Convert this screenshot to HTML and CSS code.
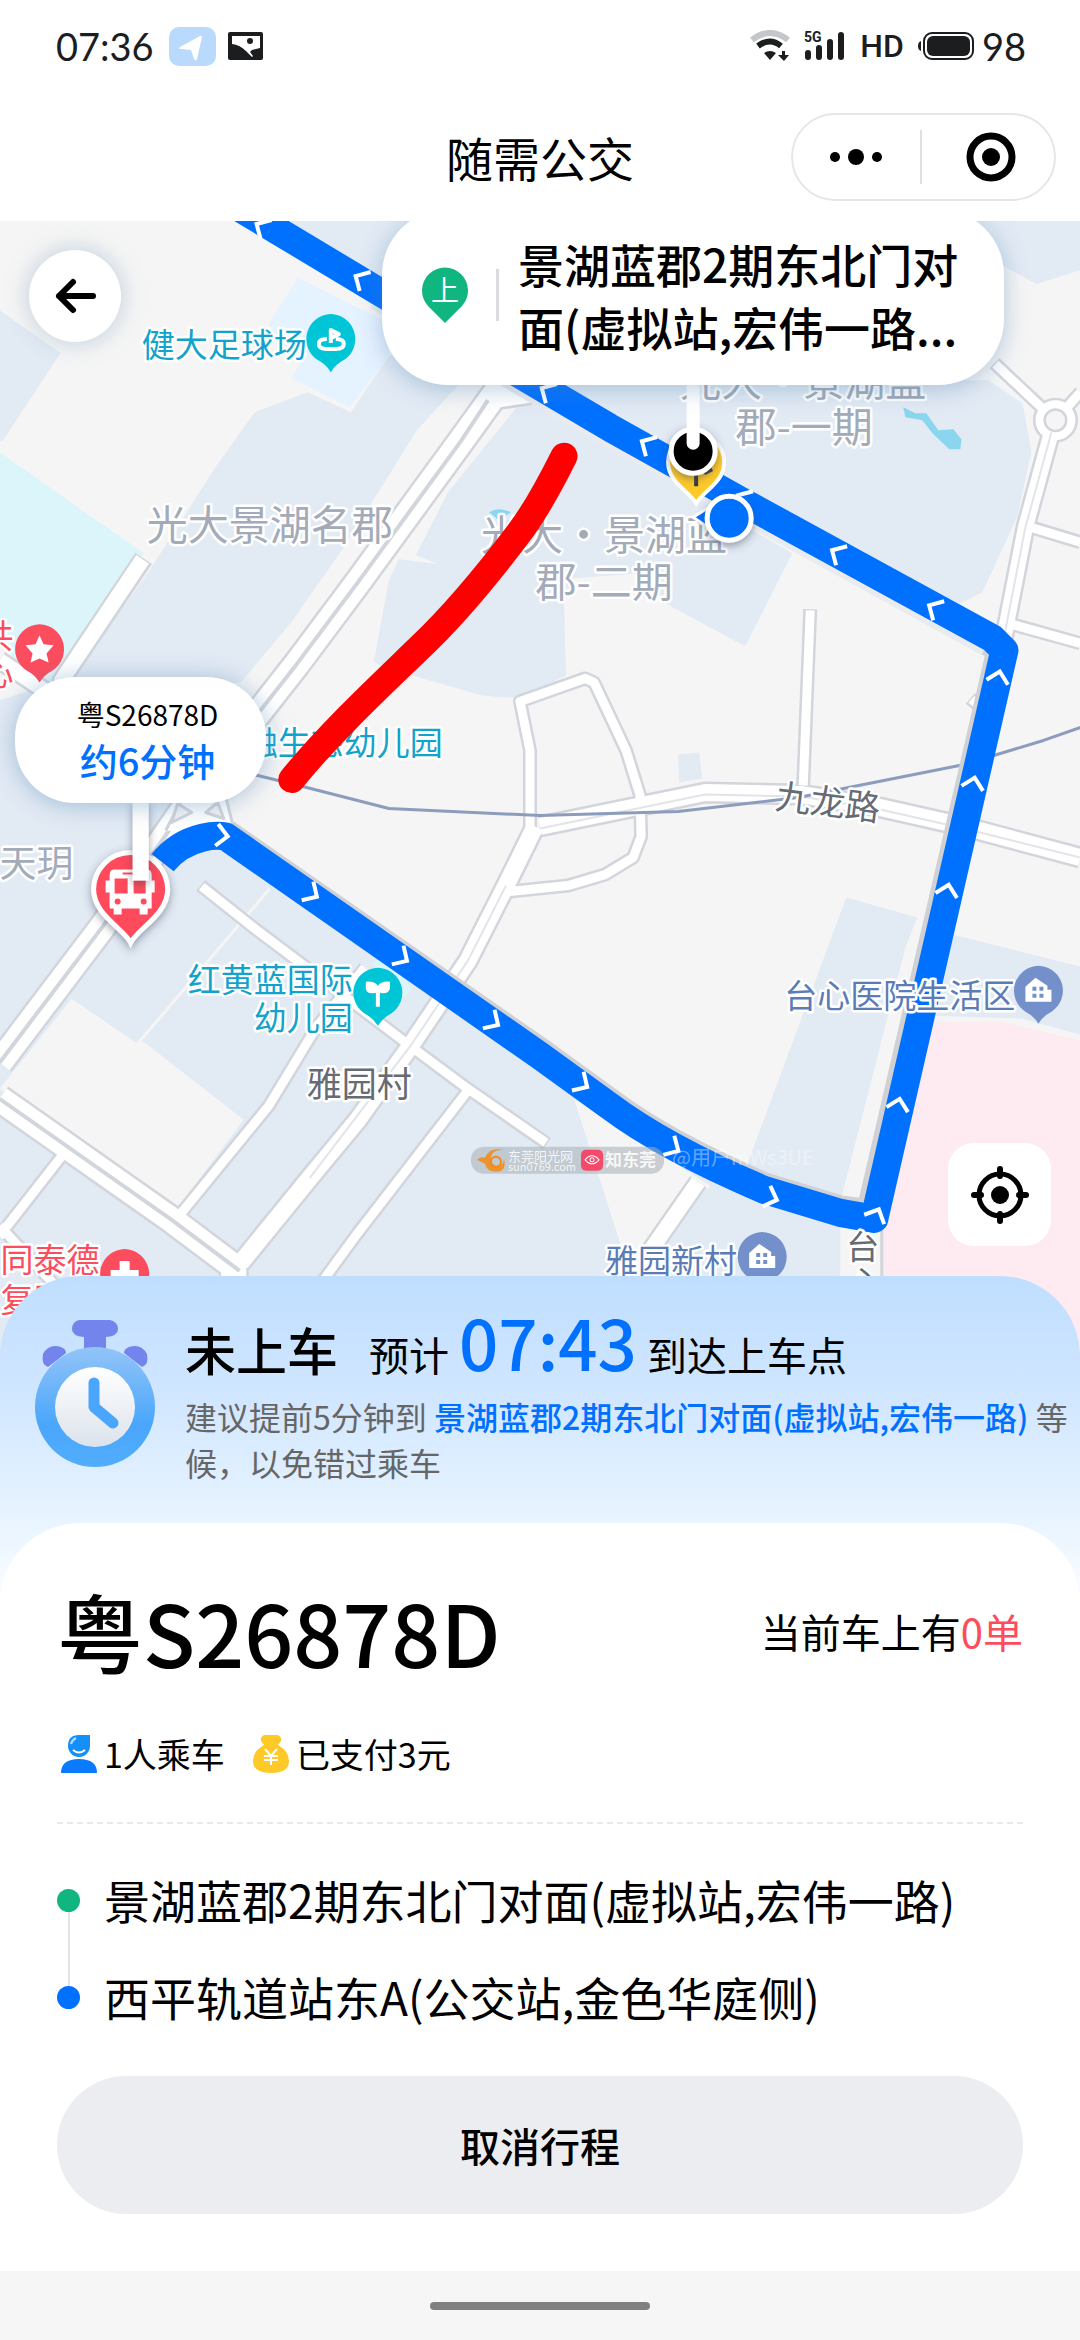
FILE: index.html
```html
<!DOCTYPE html>
<html lang="zh-CN">
<head>
<meta charset="utf-8">
<meta name="viewport" content="width=device-width, initial-scale=1">
<title>随需公交</title>
<link rel="stylesheet" href="styles.css">
</head>
<body>
<div class="app">
  <div class="status">
    <div class="status-group">
      <span class="status-num">07:36</span>
      <svg class="status-nav" viewBox="0 0 47 39" width="47" height="39"><rect width="47" height="39" rx="10" fill="#b9dafc"/><path d="M11 20 31 9q2-1 2 1l-5 22q-1 3-3 0l-3-9-10-1q-3 0-1-2z" fill="#fff"/></svg>
      <svg viewBox="0 0 35 28" width="35" height="28"><rect width="35" height="28" rx="2" fill="#1c1d1f"/><path d="M4 4H32V16l-8 2-2 2 3 4-1 1-6-6q-6-6-14-7z" fill="#fff"/><circle cx="22" cy="9" r="3" fill="#1c1d1f"/></svg>
    </div>
    <div class="status-group status-right">
      <svg viewBox="0 0 40 32" width="40" height="32"><path d="M2 10Q20-4 38 10" fill="none" stroke="#c3c6ca" stroke-width="6"/><path d="M8 16Q20 7 31 16" fill="none" stroke="#1c1d1f" stroke-width="6"/><path d="M14 23q6-4 12 0l-6 7zM32 21h3v4h4l-5 6-6-6h4z" fill="#1c1d1f"/></svg>
      <svg viewBox="0 0 42 32" width="42" height="32"><text x="0" y="12" class="net">5G</text><g stroke="#1c1d1f" stroke-width="6" stroke-linecap="round"><path d="M4 23v4M15 18v9M26 12v15M37 5v22"/></g></svg>
      <span class="status-hd">HD</span>
      <svg class="battery" viewBox="0 0 56 28" width="56" height="28"><path d="M3 9v10q-3-1-3-5t3-5z" fill="#1c1d1f"/><rect x="6" y="1" width="49" height="26" rx="8" fill="none" stroke="#1c1d1f" stroke-width="2"/><rect x="9" y="4" width="43" height="20" rx="6" fill="#1c1d1f"/></svg>
      <span class="status-num level">98</span>
    </div>
  </div>

  <header class="nav">
    <h1 class="nav-title">随需公交</h1>
    <div class="capsule">
      <button class="capsule-btn" aria-label="更多"><svg viewBox="0 0 54 20" width="54" height="20"><circle cx="6" cy="10" r="5"/><circle cx="27" cy="10" r="8"/><circle cx="48" cy="10" r="5"/></svg></button>
      <button class="capsule-btn" aria-label="关闭"><svg viewBox="0 0 50 50" width="50" height="50"><circle cx="25" cy="25" r="21" fill="none" stroke="#000" stroke-width="7"/><circle cx="25" cy="25" r="9"/></svg></button>
    </div>
  </header>

  <main class="map">
    <svg class="map-canvas" viewBox="0 221 1080 1139" preserveAspectRatio="xMidYMin slice" role="img" aria-label="地图">
      <defs>
        <filter id="shadow" x="-50%" y="-50%" width="200%" height="200%"><feDropShadow dx="0" dy="3" stdDeviation="4" flood-color="#34415a" flood-opacity=".5"/></filter>
        <path id="chev" d="M-11 5 0-6 11 5" fill="none" stroke="#fff" stroke-width="4"/>
        <path id="poi" d="M0-25A25 25 0 0 1 13 21Q5 25 0 33-5 25-13 21A25 25 0 0 1 0-25z"/>
        <g id="house"><use href="#poi" fill="#7490cb"/><path d="M-13-4-3-13 9-5V-1h4V11h-26z" fill="#fff"/><path d="M-6-4h4v4h-4zM1-4h4v4H1zM-6 3h4v4h-4zM1 3h4v4H1z" fill="#7490cb"/></g>
      </defs>
      <rect y="221" width="1080" height="1139" fill="#f5f5f5"/>
      <g fill="#e2eaf4">
        <path d="M0 310 61 353 3 441H0zM289 221H460V330z"/>
        <path d="M389 356 351 412 308 392 255 412 217 465 150 570 60 695 241 682 293 620 344 547 417 430 461 382 480 340z"/>
        <path d="M520 403 448 492 416 555 439 564 399 559 389 580 374 661 382 666 482 695 520 698 566 675 564 604 574 578 640 573 667 604 745 646 792 553 600 440 540 400z"/>
        <path d="M540 380H988L1022 403 1031 451 1017 516 982 592 958 604 760 500zM940 221h140v49l-44 14-31-17z"/>
        <path d="M0 1036 103 905 70 800 0 720V700L30 690 150 790 222 830 540 1070 690 1170 840 1220V1360H0z"/>
        <path d="M0 720 60 700 180 800 103 905 0 1036z"/>
        <path d="M846 897 917 917 905 947 840 1201 745 1169zM953 934l127 32v68l-58-16-89-3zM678 754l21-2 3 26-23 4z"/>
      </g>
      <path d="M72 998 138 1043 144 1041 244 1119 172 1215 0 1088zM574 1098 710 1185 650 1360 619 1239z" fill="#f5f5f5"/>
      <path d="M674 1222 700 1185 838 1235 842 1360H620z" fill="#e2eaf4"/>
      <path d="M138 1043 270 888" stroke="#f5f5f5" stroke-width="3"/>
      <path d="M0 452 144 553 60 678 40 690 0 640z" fill="#dbf5fa"/>
      <path d="M298 278 387 322 389 356 350 407 292 378 300 365 269 324z" fill="#e5f2ff"/>
      <path d="M929 1021h72l79 19v320H882l-2-125z" fill="#feebf1"/>
      <path d="M903 407l12 6h11l12 17 15-1 8 10-1 10h-11l-16-15-11-14-17-3zM489 512q10-6 22 0l-12 8z" fill="#8ad6ee"/>
      <path d="M372 962 390 950 412 990 400 1000z" fill="#dbf5fa"/>

      <g fill="none" stroke-linejoin="round">
        <g stroke="#d2d5db">
          <g stroke-width="14">
            <path d="M810 609 803 785M1034 528 1080 542M1012 624 1080 643M970 698 990 715"/>
            <path d="M201 885 255 928 344 995 410 1045 468 1088 547 1143M467 1091 358 1232 320 1284"/>
            <path d="M64 1153 3 1231 0 1236M0 1225 70 1300M176 1219 269 1105 317 1026 365 967"/>
            <path d="M530 830V750L520 701 585 678 594 682 626 750 640 795 641 836 633 857 605 874 568 885 510 891"/>
            <path d="M994 363 1044 410M1064 410 1080 392"/>
          </g>
          <g stroke-width="20"><path d="M144 558 62 680 130 720M698 1181 650 1250M1051 432 1025 527 1003 640"/><circle cx="1055" cy="420" r="16" stroke-width="13"/><path d="M0 660 90 720"/></g>
          <g stroke-width="22"><path d="M540 826 705 792 800 794 871 805 964 826 1080 857M535 826 506 885 468 960 410 1046 358 1119 310 1177 241 1262"/></g>
          <g stroke-width="30"><path d="M505 380 461 441 358 582 296 665 190 800 103 926 0 1062M0 1098 172 1219 240 1270M530 390 490 396M234 1262V1300"/></g>
        </g>
        <g stroke="#fff">
          <g stroke-width="9">
            <path d="M810 610 803 785M1030 527 1080 542M1008 623 1080 643M971 699 990 715"/>
            <path d="M202 886 255 928 344 995 410 1045 468 1088 546 1142M467 1091 358 1232 320 1284"/>
            <path d="M64 1153 3 1231 0 1236M0 1225 70 1300M176 1219 269 1105 317 1026 365 967"/>
            <path d="M530 830V750L520 701 585 678 594 682 626 750 640 795 641 836 633 857 605 874 568 885 510 891"/>
            <path d="M995 364 1044 410M1064 410 1080 392"/>
          </g>
          <g stroke-width="15"><path d="M143 559 62 680 130 720M698 1181 650 1250M1051 432 1025 527 1003 640"/><circle cx="1055" cy="420" r="16" stroke-width="8"/><path d="M0 660 90 720"/></g>
          <g stroke-width="17"><path d="M540 826 705 792 800 794 871 805 964 826 1080 857M535 826 506 885 468 960 410 1046 358 1119 310 1177 241 1262"/></g>
          <g stroke-width="25"><path d="M505 380 461 441 358 582 296 665 190 800 103 926 0 1062M0 1098 172 1219 240 1270M530 390 490 396M234 1262V1300"/></g>
        </g>
        <path d="M488 400 461 441 358 582 296 665 190 800 103 926 0 1062M0 1098 172 1219 240 1270" stroke="#d2d5db" stroke-width="4"/>
        <path d="M540 828 705 794 800 796 871 807 964 828 1080 857M506 885 468 960 410 1046 310 1177M1051 432 1025 527 1003 640" stroke="#e2e4e8" stroke-width="2"/>
        <path d="M166 830 184 796 226 796 236 836" fill="#fff" stroke="#d2d5db" stroke-width="3"/>
        <path d="M172 822 178 803 192 812zM206 812 218 802 224 818z" fill="#f5f5f5" stroke="#d2d5db" stroke-width="3"/>
        <path d="M876 1230V1290" stroke="#d2d5db" stroke-width="14"/><path d="M874 1230V1290" stroke="#f5f5f5" stroke-width="12"/>
        <path d="M200 775 258 775 303 786 389 808 540 815 678 811 798 797 964 764 1043 740 1080 727" stroke="#8c9cbc" stroke-width="3"/>
        <path d="M226 833 541 1052 610 1102Q666 1144 764 1186L840 1209 870 1213 1001 648 988 641" stroke="#cfd1d5" stroke-width="29"/>
        <path d="M988 642 743 507 607 431 378 296" stroke="#e9ebee" stroke-width="29"/>
        <path d="M163 862Q178 843 203 837 216 834 226 836L540 1055 609 1105Q665 1147 764 1189L840 1212 874 1218 1004 650 992 638 745 503 609 427 380 292 240 208" stroke="#0070ff" stroke-width="28"/>
      </g>
      <g>
        <use href="#chev" transform="translate(262 227) rotate(-60)"/><use href="#chev" transform="translate(361 279) rotate(-60)"/>
        <use href="#chev" transform="translate(547 391) rotate(-60)"/><use href="#chev" transform="translate(647 444) rotate(-60)"/>
        <use href="#chev" transform="translate(743 498) rotate(-60)"/><use href="#chev" transform="translate(837 553) rotate(-60)"/>
        <use href="#chev" transform="translate(934 608) rotate(-60)"/><use href="#chev" transform="translate(998 677) rotate(13)"/>
        <use href="#chev" transform="translate(973 783) rotate(13)"/><use href="#chev" transform="translate(947 890) rotate(13)"/>
        <use href="#chev" transform="translate(898 1104) rotate(13)"/><use href="#chev" transform="translate(876 1214) rotate(25)"/>
        <use href="#chev" transform="translate(222 835) rotate(98)"/><use href="#chev" transform="translate(312 893) rotate(122)"/>
        <use href="#chev" transform="translate(402 957) rotate(122)"/><use href="#chev" transform="translate(493 1021) rotate(122)"/>
        <use href="#chev" transform="translate(582 1083) rotate(122)"/><use href="#chev" transform="translate(673 1147) rotate(120)"/>
        <use href="#chev" transform="translate(771 1197) rotate(110)"/>
      </g>

      <g class="label area">
        <text x="147" y="540">光大景湖名郡</text>
        <text x="604" y="550" text-anchor="middle">光大・景湖蓝</text><text x="604" y="597" text-anchor="middle">郡-二期</text>
        <text x="803" y="396" text-anchor="middle">光大・景湖蓝</text><text x="804" y="442" text-anchor="middle">郡-一期</text>
        <text x="74" y="876" text-anchor="end" class="small">天玥</text>
      </g>
      <g class="label cyan">
        <text x="142" y="357">健大足球场</text><text x="443" y="755" text-anchor="end">融生态幼儿园</text>
        <text x="353" y="991" text-anchor="end">红黄蓝国际</text><text x="353" y="1029" text-anchor="end">幼儿园</text>
      </g>
      <g class="label blue"><text x="784" y="1007">台心医院生活区</text><text x="605" y="1272">雅园新村</text></g>
      <g class="label red"><text x="14" y="648" text-anchor="end">共</text><text x="14" y="686" text-anchor="end">心</text><text x="1" y="1271">同泰德</text><text x="1" y="1311">复医</text></g>
      <g class="label grey"><text x="307" y="1096">雅园村</text><text x="774" y="808" transform="rotate(7 774 808)">九龙路</text><text x="846" y="1258" class="narrow">台</text><text x="848" y="1294" class="narrow">心</text></g>

      <g transform="translate(331 339)"><use href="#poi" fill="#00c5d6"/><path d="M0 4V-9L8-5 0-1M-4 0q-8 0-8 5t8 5H5q8 0 8-5T5 0" fill="none" stroke="#fff" stroke-width="4" stroke-linejoin="round"/></g>
      <g transform="translate(40 649)"><use href="#poi" fill="#fb4d5e"/><path d="M0-14 4-5 14-4 7 4 9 13 0 9-9 13-7 4-14-4-4-5z" fill="#fff"/></g>
      <g transform="translate(378 992)"><use href="#poi" fill="#00c5d6"/><path d="M-12-11q8-1 12 4 4-5 12-4v7Q10 2 2 0v14h-4V0Q-11 2-12-4z" fill="#fff"/></g>
      <use href="#house" x="1038" y="990"/><use href="#house" x="762" y="1256"/>
      <g transform="translate(125 1273)"><use href="#poi" fill="#fb4d5e"/><path d="M-5-13H5v9H14V6H-14V-4H-5z" fill="#fff"/></g>

      <path d="M564 456C548 488 535 512 518 534 490 571 455 614 420 647 385 681 330 732 292 779" fill="none" stroke="#f00" stroke-width="27" stroke-linecap="round"/>

      <path d="M696 503C688 490 668 482 668 462A28 28 0 0 1 724 462C724 482 704 490 696 503z" fill="#ffca28" stroke="#fff" stroke-width="4"/>
      <path d="M696 470v16M704 473l8-4" stroke="#3c3c3c" stroke-width="4"/>
      <circle cx="693" cy="451" r="22" fill="#000" stroke="#fff" stroke-width="5" filter="url(#shadow)"/>
      <path d="M693 380v63" stroke="#fff" stroke-width="13" stroke-linecap="round"/>
      <path d="M693 517 712 505V530z" fill="#0070ff" stroke="#fff" stroke-width="3"/>
      <circle cx="729" cy="518" r="22" fill="#0070ff" stroke="#fff" stroke-width="5" filter="url(#shadow)"/>
      <g filter="url(#shadow)"><path d="M131 942C124 928 94 914 94 889A37 37 0 0 1 168 889C168 914 138 928 131 942z" fill="#ff4a5c" stroke="#fff" stroke-width="5"/></g>
      <path d="M114 869h34q4 0 4 6v5h3v12h-3v16h-4v6h-8v-6h-18v6h-8v-6h-4v-16h-4v-12h4v-5q0-6 4-6z" fill="#fff"/><path d="M115 878h13v15h-13zM134 878h12v15h-12zM123 872h16v2h-16z" fill="#ff4a5c"/><circle cx="118" cy="901" r="3" fill="#ff4a5c"/><circle cx="144" cy="901" r="3" fill="#ff4a5c"/>
      <rect x="133" y="800" width="16" height="80" fill="#fff" filter="url(#shadow)"/>

      <g class="mark">
        <rect x="471" y="1146" width="193" height="27" rx="13" fill="#a6adb5" fill-opacity=".55"/>
        <path d="M477 1159q4-4 8-2 4-11 19-8-13 0-13 9 0 7 8 8 5-3 5-8 3 13-8 13-9 0-11-8z" fill="#f58a12"/>
        <circle cx="496" cy="1161" r="5" fill="none" stroke="#f58a12" stroke-width="2"/>
        <text x="508" y="1160" font-size="13">东莞阳光网</text><text x="508" y="1170" font-size="11">sun0769.com</text>
        <rect x="581" y="1149" width="22" height="21" rx="5" fill="#fb3459"/><path d="M585 1159q7-8 14 0-7 8-14 0z" fill="none" stroke="#fff" stroke-width="1"/><circle cx="592" cy="1159" r="2" fill="none" stroke="#fff"/>
        <text x="605" y="1165" font-size="17" font-weight="700">知东莞</text>
        <text x="672" y="1164" font-size="20" fill-opacity=".4">@用户mWs3UE</text>
      </g>
    </svg>

    <button class="back" aria-label="返回"><svg viewBox="0 0 44 40" width="44" height="40"><path d="M40 20H6M20 6 6 20 20 34" fill="none" stroke="#000" stroke-width="6" stroke-linecap="round" stroke-linejoin="round"/></svg></button>
    <div class="stop-card">
      <svg viewBox="0 0 46 56" width="46" height="56"><path d="M23 56 6 39A23 23 0 1 1 40 39z" fill="#10b57f"/><text x="23" y="34" class="pin-text">上</text></svg>
      <p class="stop-name">景湖蓝郡2期东北门对面(虚拟站,宏伟一路...</p>
    </div>
    <div class="bus-bubble"><span class="bus-plate">粤S26878D</span><strong class="bus-eta">约6分钟</strong></div>
    <button class="locate" aria-label="定位"><svg viewBox="0 0 60 60" width="60" height="60"><circle cx="30" cy="30" r="21" fill="none" stroke="#000" stroke-width="5"/><circle cx="30" cy="30" r="9"/><path d="M30 4v7M30 49v7M4 30h7M49 30h7" stroke="#000" stroke-width="6" stroke-linecap="round"/></svg></button>
  </main>

  <section class="sheet">
    <div class="head">
      <svg class="clock" viewBox="0 0 124 148" width="124" height="148">
        <defs><linearGradient id="ring" x1="0" y1="0" x2="0" y2="1"><stop offset="0" stop-color="#93c4f7"/><stop offset=".65" stop-color="#49a6fc"/><stop offset="1" stop-color="#52adfb"/></linearGradient><linearGradient id="face" x1="0" y1="0" x2="0" y2="1"><stop offset="0" stop-color="#fff"/><stop offset="1" stop-color="#dce3ec"/></linearGradient></defs>
        <path d="M46 0h31q8 2 8 9t-12 8v12H51V17q-12-1-12-8t7-9zM10 34Q16 23 28 27q5 2 5 6L15 47q-7-2-5-13zM114 34Q108 23 96 27q-5 2-5 6l18 14q7-2 5-13z" fill="#7384ec"/>
        <circle cx="62" cy="87" r="60" fill="url(#ring)"/><circle cx="62" cy="87" r="40" fill="url(#face)"/>
        <path d="M61 63v24l19 16" fill="none" stroke="#49a6fc" stroke-width="11" stroke-linecap="round" stroke-linejoin="round"/>
      </svg>
      <div class="head-text">
        <p class="eta"><strong class="state">未上车</strong><span>预计</span><time class="time">07:43</time><span>到达上车点</span></p>
        <p class="tip">建议提前5分钟到 <b>景湖蓝郡2期东北门对面(虚拟站,宏伟一路)</b> 等候，以免错过乘车</p>
      </div>
    </div>
    <div class="panel">
      <div class="plate-row"><h2 class="plate">粤S26878D</h2><p class="load">当前车上有<em>0单</em></p></div>
      <div class="meta">
        <span class="meta-item"><svg viewBox="0 0 36 38" width="36" height="38"><path d="M7 11Q7 0 18 0H29V11A11 11 0 0 1 7 11z" fill="#1590fa"/><path d="M12 15q6 5 12 0" fill="none" stroke="#fff" stroke-width="2"/><path d="M10 9q1-4 5-6" fill="none" stroke="#b8dcff" stroke-width="2"/><path d="M0 38q0-14 18-14t18 14z" fill="#0a7bff"/></svg>1人乘车</span>
        <span class="meta-item"><svg viewBox="0 0 36 38" width="36" height="38"><path d="M11 0H25q4 2 3 6l-3 4Q36 16 36 26 36 38 18 38T0 26Q0 16 11 10L8 6q-1-4 3-6z" fill="#ffca28"/><path d="M12 14l6 7 6-7M18 21v9M11 21h14M11 25h14" fill="none" stroke="#fff" stroke-width="2"/></svg>已支付3元</span>
      </div>
      <ul class="stops"><li class="stop start">景湖蓝郡2期东北门对面(虚拟站,宏伟一路)</li><li class="stop end">西平轨道站东A(公交站,金色华庭侧)</li></ul>
      <button class="cancel">取消行程</button>
    </div>
  </section>
  <div class="home"><span class="home-bar"></span></div>
</div>
</body>
</html>
```
FILE: styles.css
```css
* { box-sizing: border-box; }
body, h1, h2, p, ul { margin: 0; padding: 0; }
body { font-family: "Noto Sans CJK SC", sans-serif; color: #000; background: #fff; }
button { border: 0; padding: 0; font: inherit; color: inherit; display: flex; align-items: center; justify-content: center; }
svg { display: block; flex: none; }
.app { display: flex; flex-direction: column; min-height: 100vh; overflow: hidden; }

.status { height: 92px; padding: 0 54px 0 56px; display: flex; align-items: center; justify-content: space-between; color: #1c1d1f; }
.status-group { display: flex; align-items: center; gap: 12px; }
.status-right { gap: 14px; }
.status-num { font: 38px/40px Lato, sans-serif; }
.level { margin-left: -6px; }
.status-nav { margin-left: 3px; }
.status-hd { font: 500 32px/40px Roboto, sans-serif; }
.net { font: bold 14px Roboto, sans-serif; fill: #1c1d1f; }

.nav { height: 129px; padding: 0 24px; display: grid; grid-template-columns: 1fr auto 1fr; align-items: center; }
.nav-title { grid-column: 2; font-size: 47px; line-height: 60px; font-weight: 400; }
.capsule { justify-self: end; display: flex; width: 265px; height: 88px; border: 2px solid #e6e6e6; border-radius: 44px; align-items: center; }
.capsule-btn { flex: 1; height: 54px; background: none; }
.capsule-btn + .capsule-btn { border-left: 2px solid #e0e0e0; padding-left: 6px; }

.map { position: relative; flex: 1; min-height: 700px; margin-bottom: -85px; overflow: hidden; }
.map-canvas { position: absolute; inset: 0; width: 100%; height: 100%; }
.label { font-size: 33px; stroke: #fff; stroke-width: 5px; stroke-linejoin: round; paint-order: stroke; }
.area { font-size: 41px; fill: #a3abb9; }
.area .small { font-size: 37px; }
.cyan { fill: #12a3cc; }
.blue { fill: #5c7cb6; }
.red { fill: #fb4d5e; }
.grey { font-size: 35px; fill: #666b74; }
.narrow { font-size: 33px; }
.mark { fill: #fff; fill-opacity: .85; }

.back { position: absolute; left: 29px; top: 29px; width: 92px; height: 92px; border-radius: 50%; background: #fff; box-shadow: 0 0 24px rgba(90, 130, 170, .35); }
.stop-card { position: absolute; left: 382px; top: -12px; width: 622px; padding: 23px 40px 27px; display: flex; align-items: center; border-radius: 66px; background: #fff; box-shadow: 0 4px 24px rgba(80, 130, 175, .4); }
.pin-text { font-size: 28px; fill: #fff; text-anchor: middle; }
.stop-name { display: flex; align-items: center; flex: 1; margin-left: 28px; font-size: 46px; line-height: 63px; font-weight: 500; }
.stop-name::before { content: ""; flex: none; width: 3px; height: 52px; margin-right: 19px; background: #d9dbdf; }
.bus-bubble { position: absolute; left: 15px; top: 456px; width: 251px; height: 126px; padding: 0 0 4px 14px; display: flex; flex-direction: column; align-items: center; justify-content: center; border-radius: 60px; background: #fff; box-shadow: 0 2px 24px rgba(80, 130, 175, .45); }
.bus-plate { font-size: 28px; line-height: 44px; }
.bus-eta { font-size: 38px; line-height: 48px; font-weight: 500; color: #0070ff; }
.locate { position: absolute; right: 29px; bottom: 115px; width: 103px; height: 103px; border-radius: 26px; background: #fff; }

.sheet { position: relative; border-radius: 80px 80px 0 0; background: linear-gradient(#bfdeff 0, #d0e6ff 115px, #e6f3ff 235px, #fafdff 320px, #fff 350px); }
.head { display: flex; gap: 28px; padding: 29px 8px 38px 33px; }
.clock { margin-top: 15px; }
.head-text { flex: 1; display: flex; flex-direction: column; gap: 3px; }
.eta { display: flex; align-items: baseline; font-size: 40px; line-height: 72px; }
.state { font-size: 51px; font-weight: 500; margin-right: 31px; }
.time { font-size: 69px; font-weight: 500; color: #0070ff; margin: 0 10px; }
.tip { font-size: 32px; line-height: 46px; color: #666; }
.tip b { font-weight: 500; color: #0070ff; }

.panel { padding: 64px 57px 57px; border-radius: 80px 80px 0 0; background: #fff; }
.plate-row { display: flex; align-items: center; justify-content: space-between; }
.plate { font-size: 86px; line-height: 88px; font-weight: 500; }
.load { font-size: 40px; line-height: 48px; }
.load em { font-style: normal; color: #fb4d5c; }
.meta { display: flex; gap: 28px; margin-top: 59px; padding: 0 4px 48px; font-size: 34px; line-height: 40px; }
.meta-item { display: flex; align-items: center; gap: 7px; }
.stops { list-style: none; padding-top: 53px; display: flex; flex-direction: column; gap: 49px; background: repeating-linear-gradient(90deg, #e9e9e9 0 6px, transparent 6px 10px) 0 0 / 100% 2px no-repeat; }
.stop { position: relative; padding-left: 47px; font-size: 46px; line-height: 48px; }
.stop::before { content: ""; position: absolute; left: 0; top: 14px; width: 23px; height: 23px; border-radius: 50%; background: #10b57f; }
.stop.end::before { background: #0070ff; }
.start::after { content: ""; position: absolute; left: 11px; top: 37px; width: 2px; height: 74px; background: #e2e3e7; }
.cancel { width: 100%; height: 138px; margin-top: 56px; border-radius: 69px; background: #ecedf1; font-size: 40px; font-weight: 500; }
.home { height: 69px; display: flex; align-items: center; justify-content: center; background: #f6f6f6; }
.home-bar { width: 220px; height: 8px; border-radius: 4px; background: #808082; }
```
